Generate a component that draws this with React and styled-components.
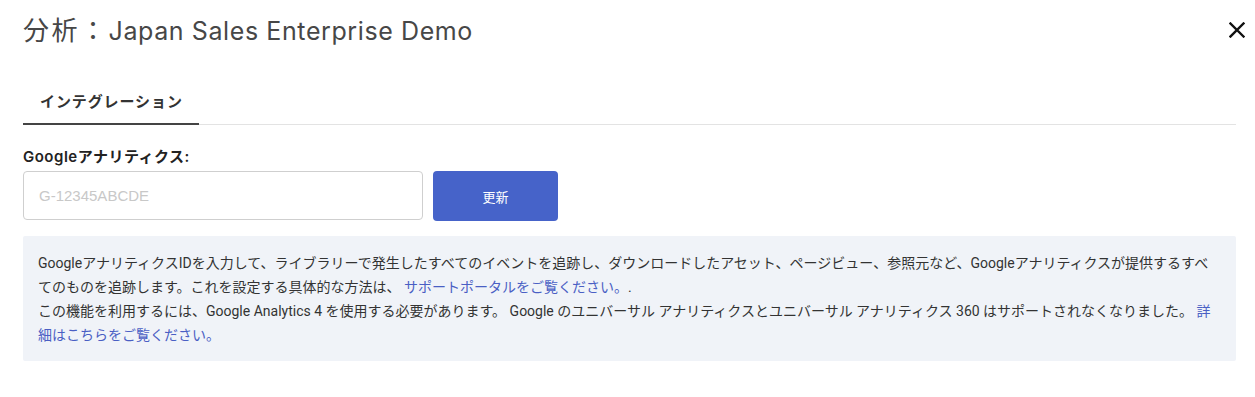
import React from "react";
import styled, { createGlobalStyle } from "styled-components";

const Global = createGlobalStyle`
  html, body { margin: 0; padding: 0; background: #fff; }
  body { font-family: "Inter", "Noto Sans CJK JP", sans-serif; color: #333; }
  * { box-sizing: border-box; }
`;

const Page = styled.div`
  width: 1255px;
  padding: 12px 19px 0 23px;
`;

const Header = styled.div`
  display: flex;
  align-items: center;
  justify-content: space-between;
  margin-right: -11px;
`;

const Title = styled.h1`
  margin: 0;
  font-family: "Inter", "Noto Sans CJK JP", sans-serif;
  font-weight: 400;
  font-size: 25px;
  line-height: 34px;
  letter-spacing: 0.6px;
  color: #474747;
`;

const TitleKanji = styled.span`
  font-family: "Noto Sans CJK JP", sans-serif;
  font-size: 26px;
  letter-spacing: 2.5px;
`;

const CloseButton = styled.button`
  border: 0;
  background: none;
  padding: 0;
  width: 20px;
  height: 20px;
  display: flex;
  align-items: center;
  justify-content: center;
  cursor: pointer;
`;

const Tabs = styled.div`
  display: flex;
  margin-top: 30px;
  border-bottom: 1px solid #e3e3e3;
`;

const Tab = styled.div`
  padding: 12px 16px 11px 17px;
  font-family: "Noto Sans CJK JP", sans-serif;
  font-weight: 700;
  font-size: 15px;
  line-height: 22px;
  letter-spacing: 0.9px;
  color: #333;
  border-bottom: 2px solid ${(p) => (p.$active ? "#444" : "transparent")};
  margin-bottom: -1px;
`;

const Label = styled.label`
  display: block;
  margin-top: 22px;
  font-family: "Inter", "Noto Sans CJK JP", sans-serif;
  font-weight: 600;
  font-size: 15px;
  line-height: 20px;
  letter-spacing: 0.5px;
  color: #222;
`;

const Row = styled.div`
  display: flex;
  align-items: flex-start;
  gap: 10px;
  margin-top: 4px;
`;

const Input = styled.input`
  width: 400px;
  height: 49px;
  border: 1px solid #cfcfcf;
  border-radius: 4px;
  padding: 0 15px;
  font-family: "Liberation Sans", Arial, sans-serif;
  font-size: 15px;
  color: #333;
  outline: none;
  &::placeholder { color: #c8c8c8; }
`;

const Button = styled.button`
  width: 125px;
  height: 50px;
  border: 0;
  border-radius: 4px;
  background: #4663c9;
  color: #fff;
  font-family: "Noto Sans CJK JP", sans-serif;
  font-size: 13px;
  cursor: pointer;
`;

const InfoBox = styled.div`
  margin-top: 15px;
  background: #f0f3f8;
  border-radius: 2px;
  padding: 15px 15px 14px 15px;
  font-family: "Roboto", "Noto Sans CJK JP", sans-serif;
  font-size: 14px;
  line-height: 24px;
  color: #333;
`;

const Link = styled.a`
  color: #4a5fc4;
  text-decoration: none;
`;

export default function App() {
  return (
    <>
      <Global />
      <Page>
        <Header>
          <Title>
            <TitleKanji>分析：</TitleKanji>Japan Sales Enterprise Demo
          </Title>
          <CloseButton aria-label="閉じる">
            <svg width="16" height="16" viewBox="0 0 16 16">
              <path d="M1.5 1.5 L14.5 14.5 M14.5 1.5 L1.5 14.5" stroke="#111" strokeWidth="2.4" strokeLinecap="square" fill="none" />
            </svg>
          </CloseButton>
        </Header>
        <Tabs>
          <Tab $active>インテグレーション</Tab>
        </Tabs>
        <Label htmlFor="ga">Googleアナリティクス:</Label>
        <Row>
          <Input id="ga" placeholder="G-12345ABCDE" />
          <Button>更新</Button>
        </Row>
        <InfoBox>
          GoogleアナリティクスIDを入力して、ライブラリーで発生したすべてのイベントを追跡し、ダウンロードしたアセット、ページビュー、参照元など、Googleアナリティクスが提供するすべてのものを追跡します。これを設定する具体的な方法は、 <Link href="#">サポートポータルをご覧ください。</Link>.
          <br />
          この機能を利用するには、Google Analytics 4 を使用する必要があります。 Google のユニバーサル アナリティクスとユニバーサル アナリティクス 360 はサポートされなくなりました。 <Link href="#">詳細はこちらをご覧ください。</Link>
        </InfoBox>
      </Page>
    </>
  );
}
